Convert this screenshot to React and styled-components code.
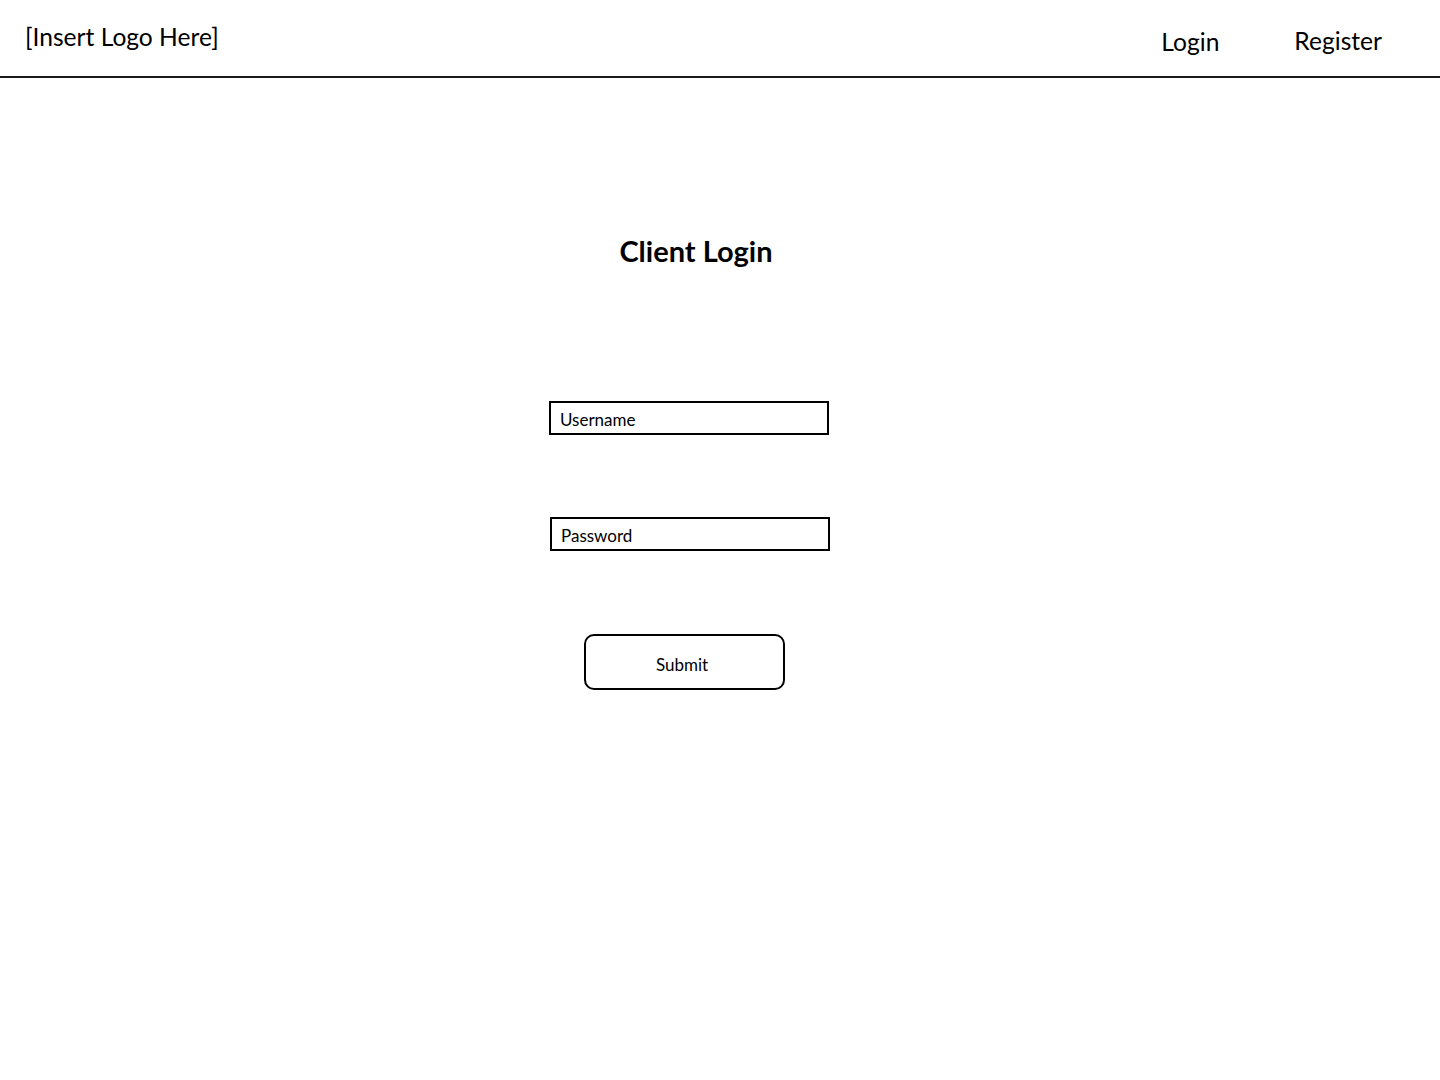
import React from "react";
import styled, { createGlobalStyle } from "styled-components";

const GlobalStyle = createGlobalStyle`
  body {
    margin: 0;
    background: #fff;
    color: #000;
    font-family: Lato, "Open Sans", sans-serif;
  }
`;

const App = () => {
  return (
    <>
      <GlobalStyle />
      <Header>
        <Logo>[Insert Logo Here]</Logo>
        <Nav>
          <NavLink href="#">Login</NavLink>
          <NavLink href="#">Register</NavLink>
        </Nav>
      </Header>

      <Main>
        <Form onSubmit={(e) => e.preventDefault()}>
          <Title>Client Login</Title>
          <Field shift={0} placeholder="Username" />
          <Field shift={2} type="password" placeholder="Password" />
          <Button type="submit">Submit</Button>
        </Form>
      </Main>
    </>
  );
};

const Header = styled.header`
  height: 78px;
  box-sizing: border-box;
  display: flex;
  justify-content: space-between;
  border-bottom: 2px solid #1a1a1a;
`;

const Logo = styled.div`
  padding: 22px 0 0 25px;
  font-size: 24.6px;
  line-height: 30px;
`;

const Nav = styled.nav`
  display: flex;
  gap: 75px;
  padding: 26px 58px 0 0;

  a:first-child {
    padding-top: 1px;
  }
`;

const NavLink = styled.a`
  color: #000;
  text-decoration: none;
  font-size: 24.6px;
  line-height: 30px;
  height: 30px;
`;

const Main = styled.main`
  padding-top: 155px;
`;

const Form = styled.form`
  width: 282px;
  margin-left: 548px;
  display: flex;
  flex-direction: column;
  align-items: center;
`;

const Title = styled.h1`
  margin: 0 0 132px 14px;
  font-size: 29px;
  line-height: 36px;
  font-weight: 700;
`;

const Field = styled.input`
  box-sizing: border-box;
  width: 280px;
  height: 34px;
  margin: 0 0 82px ${(p) => p.shift}px;
  padding: 2px 9px 0;
  border: 2px solid #000;
  border-radius: 0;
  outline: none;
  font-family: inherit;
  font-size: 17px;
  color: #000;

  &::placeholder {
    color: #000;
    opacity: 1;
  }
`;

const Button = styled.button`
  box-sizing: border-box;
  width: 201px;
  height: 56px;
  margin: 1px 10px 0 0;
  padding: 5px 4px 0 0;
  border: 2px solid #000;
  border-radius: 10px;
  background: #fff;
  color: #000;
  font-family: inherit;
  font-size: 17px;
  cursor: pointer;
`;

export default App;
